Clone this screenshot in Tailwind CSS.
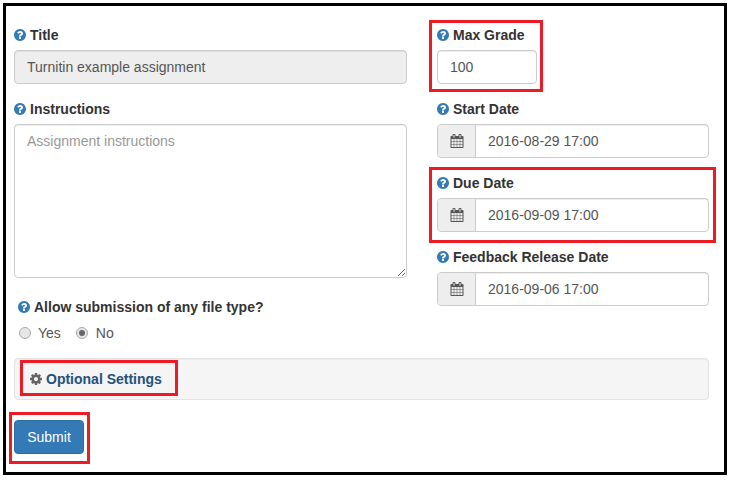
<!DOCTYPE html>
<html lang="en">
<head>
  <meta charset="UTF-8"/>
  <title>Assignment form</title>
  <script src="https://cdn.jsdelivr.net/npm/@tailwindcss/browser@4"></script>
</head>
<body class="bg-white font-['Liberation_Sans',sans-serif] text-sm leading-5 text-[#333]">

  <svg class="hidden">
    <symbol id="q" viewBox="128 128 1536 1536"><path d="M1024 1376v-192q0-14-9-23t-23-9h-192q-14 0-23 9t-9 23v192q0 14 9 23t23 9h192q14 0 23-9t9-23zm256-672q0-88-55.5-163t-138.5-116-170-41q-243 0-371 213-15 24 8 42l132 100q7 6 19 6 16 0 25-12 53-68 86-92 34-24 86-24 48 0 85.5 26t37.5 59q0 38-20 61t-68 45q-63 28-115.5 86.5t-52.5 125.5v36q0 14 9 23t23 9h192q14 0 23-9t9-23q0-19 21.5-49.5t54.5-49.5q32-18 49-28.5t46-35 44.5-48 28-60.5 12.5-81zm384 192q0 209-103 385.5t-279.5 279.5-385.5 103-385.5-103-279.5-279.5-103-385.5 103-385.5 279.5-279.5 385.5-103 385.5 103 279.5 279.5 103 385.5z"/></symbol>
    <symbol id="cal" viewBox="0 0 1792 1792"><path d="M192 1664h288v-288h-288v288zm352 0h320v-288h-320v288zm-352-352h288v-320h-288v320zm352 0h320v-320h-320v320zm-352-384h288v-288h-288v288zm736 736h320v-288h-320v288zm-384-736h320v-288h-320v288zm768 736h288v-288h-288v288zm-384-352h320v-320h-320v320zm-352-864v-288q0-13-9.5-22.5t-22.5-9.5h-64q-13 0-22.5 9.5t-9.5 22.5v288q0 13 9.5 22.5t22.5 9.5h64q13 0 22.5-9.5t9.5-22.5zm736 864h288v-320h-288v320zm-384-384h320v-288h-320v288zm384 0h288v-288h-288v288zm32-480v-288q0-13-9.5-22.5t-22.5-9.5h-64q-13 0-22.5 9.5t-9.5 22.5v288q0 13 9.5 22.5t22.5 9.5h64q13 0 22.5-9.5t9.5-22.5zm384-64v1280q0 52-38 90t-90 38h-1408q-52 0-90-38t-38-90v-1280q0-52 38-90t90-38h128v-96q0-66 47-113t113-47h64q66 0 113 47t47 113v96h384v-96q0-66 47-113t113-47h64q66 0 113 47t47 113v96h128q52 0 90 38t38 90z"/></symbol>
  </svg>

  <div class="relative ml-[3px] mt-[3px] h-[472px] w-[724px] border-[3px] border-black px-2 pt-[19px]">
    <div class="flex gap-[30px]">

      <!-- left column -->
      <div class="w-[393px]">
        <div class="flex items-center gap-1 font-bold"><svg class="h-3 w-3 fill-[#337ab7]"><use href="#q"/></svg>Title</div>
        <input disabled value="Turnitin example assignment" class="mt-[5px] mb-[15px] block h-[34px] w-full rounded border border-[#ccc] bg-[#eee] px-3 text-[#555] shadow-[inset_0_1px_1px_rgba(0,0,0,0.075)]"/>

        <div class="flex items-center gap-1 font-bold"><svg class="h-3 w-3 fill-[#337ab7]"><use href="#q"/></svg>Instructions</div>
        <textarea placeholder="Assignment instructions" class="mt-[5px] mb-[19px] block h-[154px] w-full rounded border border-[#ccc] px-3 py-[6px] text-[#555] placeholder:text-[#999] shadow-[inset_0_1px_1px_rgba(0,0,0,0.075)]"></textarea>

        <div class="pl-1">
          <div class="flex items-center gap-1 font-bold"><svg class="h-3 w-3 fill-[#337ab7]"><use href="#q"/></svg>Allow submission of any file type?</div>
          <div class="mt-[6px] flex h-5 items-center">
            <span class="ml-px h-3 w-3 rounded-full border border-[#aaa] bg-[#e6e6e6]"></span>
            <span class="ml-[7px] text-[#555]">Yes</span>
            <span class="ml-[15px] flex h-3 w-3 items-center justify-center rounded-full border border-[#aaa] bg-[#e6e6e6]"><span class="h-[6px] w-[6px] rounded-full bg-[#666]"></span></span>
            <span class="ml-[8px] text-[#555]">No</span>
          </div>
        </div>
      </div>

      <!-- right column -->
      <div class="w-[272px]">
        <div class="flex items-center gap-1 font-bold"><svg class="h-3 w-3 fill-[#337ab7]"><use href="#q"/></svg>Max Grade</div>
        <input value="100" class="mt-[5px] mb-[15px] block h-[34px] w-[100px] rounded border border-[#ccc] px-3 text-[#555] shadow-[inset_0_1px_1px_rgba(0,0,0,0.075)]"/>

        <div class="flex items-center gap-1 font-bold"><svg class="h-3 w-3 fill-[#337ab7]"><use href="#q"/></svg>Start Date</div>
        <div class="mt-[5px] mb-[15px] flex h-[34px] rounded border border-[#ccc] text-[#555]">
          <div class="flex w-[38px] items-center justify-center rounded-l border-r border-[#ccc] bg-[#eee]"><svg class="h-[14px] w-[14px] fill-[#555]"><use href="#cal"/></svg></div>
          <div class="flex flex-1 items-center px-3 shadow-[inset_0_1px_1px_rgba(0,0,0,0.075)]">2016-08-29 17:00</div>
        </div>

        <div class="flex items-center gap-1 font-bold"><svg class="h-3 w-3 fill-[#337ab7]"><use href="#q"/></svg>Due Date</div>
        <div class="mt-[5px] mb-[15px] flex h-[34px] rounded border border-[#ccc] text-[#555]">
          <div class="flex w-[38px] items-center justify-center rounded-l border-r border-[#ccc] bg-[#eee]"><svg class="h-[14px] w-[14px] fill-[#555]"><use href="#cal"/></svg></div>
          <div class="flex flex-1 items-center px-3 shadow-[inset_0_1px_1px_rgba(0,0,0,0.075)]">2016-09-09 17:00</div>
        </div>

        <div class="flex items-center gap-1 font-bold"><svg class="h-3 w-3 fill-[#337ab7]"><use href="#q"/></svg>Feedback Release Date</div>
        <div class="mt-[5px] flex h-[34px] rounded border border-[#ccc] text-[#555]">
          <div class="flex w-[38px] items-center justify-center rounded-l border-r border-[#ccc] bg-[#eee]"><svg class="h-[14px] w-[14px] fill-[#555]"><use href="#cal"/></svg></div>
          <div class="flex flex-1 items-center px-3 shadow-[inset_0_1px_1px_rgba(0,0,0,0.075)]">2016-09-06 17:00</div>
        </div>
      </div>
    </div>

    <!-- optional settings panel -->
    <div class="mt-[15px] flex h-[42px] w-[695px] items-center gap-1 rounded border border-[#e3e3e3] bg-[#f5f5f5] pl-[15px] font-bold text-[#23527c] shadow-[inset_0_1px_1px_rgba(0,0,0,0.05)]">
      <svg class="h-3 w-3 fill-[#666]" viewBox="128 128 1536 1536"><path d="M1152 896q0-106-75-181t-181-75-181 75-75 181 75 181 181 75 181-75 75-181zm512-109v222q0 12-8 23t-20 13l-185 28q-19 54-39 91 35 50 107 138 10 12 10 25t-9 23q-27 37-99 108t-94 71q-12 0-26-9l-138-108q-44 23-91 38-16 136-29 186-7 28-36 28h-222q-14 0-24.5-8.5t-11.5-21.5l-28-184q-49-16-90-37l-141 107q-10 9-25 9-14 0-25-11-126-114-165-168-7-10-7-23 0-12 8-23 15-21 51-66.5t54-70.5q-27-50-41-99l-183-27q-13-2-21-12.5t-8-23.5v-222q0-12 8-23t19-13l186-28q14-46 39-92-40-57-107-138-10-12-10-24 0-10 9-23 26-36 98.5-107.5t94.5-71.5q13 0 26 10l138 107q44-23 91-38 16-136 29-186 7-28 36-28h222q14 0 24.5 8.5t11.5 21.5l28 184q49 16 90 37l142-107q9-9 24-9 13 0 25 10 129 119 165 170 7 8 7 22 0 12-8 23-15 21-51 66.5t-54 70.5q26 50 41 98l183 28q13 2 21 12.5t8 23.5z"/></svg>
      Optional Settings
    </div>

    <button class="mt-5 block h-[34px] w-[70px] rounded border border-[#2e6da4] bg-[#337ab7] text-white">Submit</button>

    <!-- red annotation boxes drawn over the form -->
    <div class="absolute left-[423px] top-[14px] h-[72px] w-[114px] border-[3px] border-[#ed1c24]"></div>
    <div class="absolute left-[423px] top-[161px] h-[76px] w-[287px] border-[3px] border-[#ed1c24]"></div>
    <div class="absolute left-[14px] top-[354px] h-[36px] w-[158px] border-[3px] border-[#ed1c24]"></div>
    <div class="absolute left-[3px] top-[406px] h-[52px] w-[81px] border-[3px] border-[#ed1c24]"></div>
  </div>
</body>
</html>
